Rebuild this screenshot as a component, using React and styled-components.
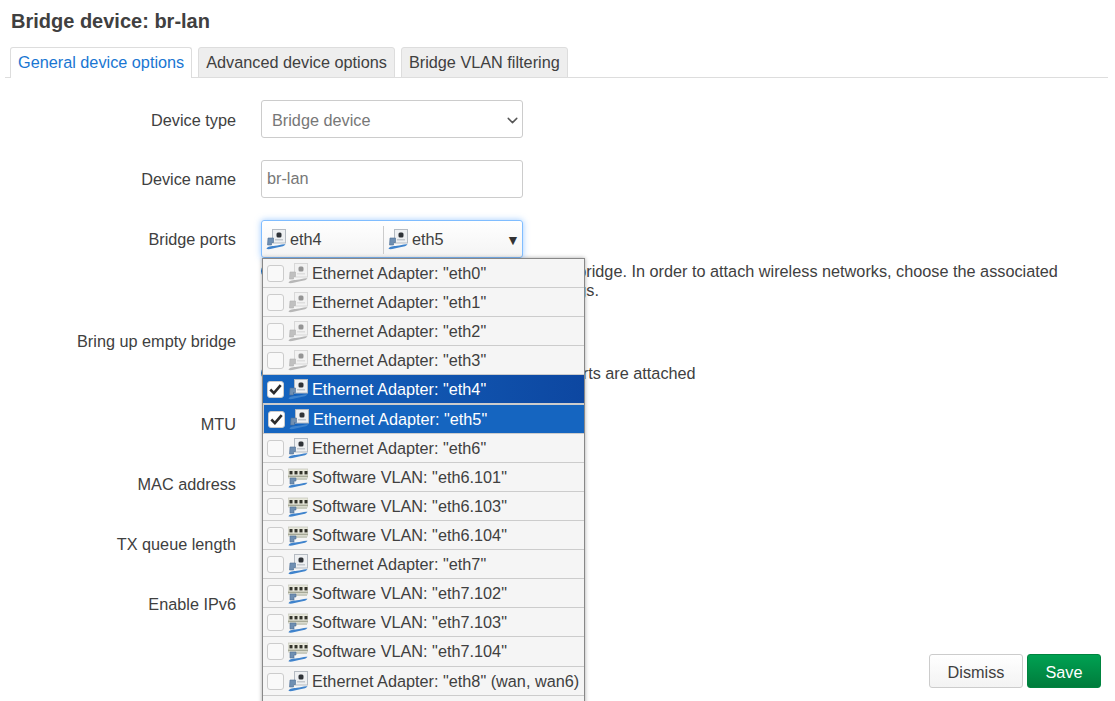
import React from "react";
import styled, { createGlobalStyle } from "styled-components";
import { ChevronDown } from "lucide-react";

const Global = createGlobalStyle`
  html, body {
    margin: 0;
    height: 701px;
    overflow: hidden;
    background: #fff;
    font-family: "Liberation Sans", Arial, sans-serif;
    font-size: 16.25px;
    color: #404040;
  }
`;

const Page = styled.div`
  padding: 0 7px 0 5px;
`;
const Title = styled.h3`
  margin: 0;
  padding: 9px 0 0 6px;
  height: 38px;
  box-sizing: content-box;
  font-size: 20px;
  line-height: 24px;
  font-weight: bold;
`;
const TabBar = styled.div`
  display: flex;
  gap: 6px;
  padding-left: 5px;
  height: 30px;
  border-bottom: 1px solid #ddd;
`;
const Tab = styled.div`
  box-sizing: border-box;
  height: 31px;
  padding: 0 7px;
  line-height: 29px;
  border: 1px solid #ddd;
  border-bottom: ${(p) => (p.$active ? "none" : "1px solid #ddd")};
  border-radius: 3px 3px 0 0;
  background: ${(p) => (p.$active ? "#fff" : "#eee")};
  color: ${(p) => (p.$active ? "#1976d2" : "#404040")};
  white-space: nowrap;
`;
const Form = styled.div`
  padding-top: 22px;
  display: flex;
  flex-direction: column;
`;
const Row = styled.div`
  display: grid;
  grid-template-columns: 231px 1fr;
  column-gap: 25px;
  margin-bottom: ${(p) => p.$gap}px;
`;
const Label = styled.div`
  text-align: right;
  height: 38px;
  line-height: ${(p) => p.$lh || 38}px;
  margin-top: ${(p) => p.$top || 0}px;
`;
const Field = styled.div`
  position: relative;
  min-width: 0;
`;
const Control = styled.div`
  box-sizing: border-box;
  width: 262px;
  height: 38px;
  border: 1px solid #ccc;
  border-radius: 3px;
  background: #fff;
  color: #777;
  display: flex;
  align-items: center;
  padding: 0 5px 1px;
`;
const SelectBox = styled(Control)`
  justify-content: space-between;
  padding: 2px 1px 0 10px;
  color: #777;
`;
const Multi = styled.div`
  box-sizing: border-box;
  width: 262px;
  height: 38px;
  border: 1px solid #80bdff;
  border-radius: 3px;
  background: linear-gradient(#fff, #f4f4f4);
  box-shadow: 0 0 6px rgba(80, 160, 255, 0.55);
  display: grid;
  grid-template-columns: 122px 1fr 18px;
  align-items: center;
  color: #404040;
`;
const Chip = styled.div`
  box-sizing: border-box;
  display: flex;
  align-items: center;
  gap: 4px;
  height: 28px;
  padding: 0 0 2px 4px;
  border-right: ${(p) => (p.$line ? "1px solid #ccc" : "none")};
`;
const Caret = styled.div`
  font-size: 14px;
  color: #333;
  line-height: 38px;
  padding-left: 2px;
`;
const Help = styled.div`
  position: relative;
  box-sizing: border-box;
  width: 810px;
  line-height: 19px;
  padding-left: 20px;
  margin-top: ${(p) => p.$top}px;
`;
const HelpIcon = styled.span`
  position: absolute;
  left: 0;
  top: 2px;
  width: 14px;
  height: 14px;
  border-radius: 50%;
  background: #1976d2;
`;
const Dropdown = styled.div`
  position: absolute;
  top: 38px;
  left: 1px;
  width: 323px;
  box-sizing: border-box;
  background: #f5f5f5;
  border: 1px solid #888;
  border-bottom: none;
  box-shadow: 0 0 4px rgba(0, 0, 0, 0.35);
  z-index: 5;
`;
const Item = styled.div`
  box-sizing: border-box;
  height: ${(p) => p.$h}px;
  display: flex;
  align-items: center;
  padding-left: 4px;
  gap: 4px;
  white-space: nowrap;
  color: ${(p) => (p.$sel ? "#fff" : "#404040")};
  border-bottom: 1px solid #ccc;
  border-top: ${(p) => (p.$focus ? "1px solid #ccc" : "none")};
  border-left: ${(p) => (p.$focus ? "1px solid #ccc" : "none")};
  background: ${(p) =>
    p.$focus
      ? "#1565c0"
      : p.$sel
        ? "linear-gradient(90deg, #1565c0, #0d47a1)"
        : "#f5f5f5"};
`;
const Check = styled.span`
  box-sizing: border-box;
  width: 17px;
  height: 17px;
  flex: none;
  border: 1px solid #ccc;
  border-radius: 3px;
  background: ${(p) => (p.$on ? "#fff" : "#f9f9f9")};
  display: flex;
  align-items: center;
  justify-content: center;
`;
const Footer = styled.div`
  display: flex;
  justify-content: flex-end;
  gap: 4px;
  padding-right: 7px;
  margin-top: 31px;
`;
const Button = styled.div`
  box-sizing: border-box;
  height: 34px;
  line-height: 34px;
  text-align: center;
  border-radius: 3px;
  width: ${(p) => p.$w}px;
  border: 1px solid ${(p) => (p.$primary ? "#00843f" : "#ccc")};
  color: ${(p) => (p.$primary ? "#fff" : "#404040")};
  background: ${(p) =>
    p.$primary
      ? "linear-gradient(#00a152, #007c3c)"
      : "linear-gradient(#fff, #f3f3f3)"};
`;

const EthIcon = ({ dim }) => (
  <svg width="20" height="21" viewBox="0 0 20 21" style={{ flex: "none", filter: dim ? "grayscale(1) opacity(.5)" : "none" }}>
    <rect x="6.5" y="0.5" width="13" height="13.5" fill="#eef0f2" stroke="#b5bbc2" />
    <rect x="10.5" y="3.5" width="5" height="5" rx="1.5" fill="#2f3338" />
    <rect x="9" y="10" width="8" height="1.5" fill="#c3c8cd" />
    <path d="M2 9h5.5v4.5H5.5V16H1.5z" fill="#6f8fb2" stroke="#4d6f96" strokeWidth=".6" />
    <path
      d="M0.5 20c1-3 5-2.6 8.5-3.2 3.5-.6 7-2 10.5-1.6-1.4 2.6-5.5 2.6-8.5 3.2-3.5.7-7 2.2-10.5 1.6z"
      fill="#3f83cc"
    />
  </svg>
);

const VlanIcon = () => (
  <svg width="20" height="21" viewBox="0 0 20 21" style={{ flex: "none" }}>
    <rect x="0" y="2" width="20" height="9" fill="#e8e8dc" stroke="#b9bbb0" strokeWidth=".6" />
    {[1.5, 6.5, 11.5, 16.5].map((x) => (
      <rect key={x} x={x} y="4" width="3" height="3.4" fill="#34342c" />
    ))}
    <rect x="0" y="8.6" width="20" height="1.4" fill="#a5a896" />
    <rect x="8" y="11" width="11" height="2" fill="#c9ccc0" />
    <path d="M2 11h6v3H6v3H2z" fill="#6f8fb2" stroke="#4d6f96" strokeWidth=".6" />
    <path
      d="M0.5 20.5c1-3 5-2.6 8.5-3.2 3.5-.6 7-2 10.5-1.6-1.4 2.6-5.5 2.6-8.5 3.2-3.5.7-7 2.2-10.5 1.6z"
      fill="#3f83cc"
    />
  </svg>
);

const Tick = () => (
  <svg width="13" height="11" viewBox="0 0 13 11">
    <path d="M1.3 5.5l3.6 3.6 6.8-8" fill="none" stroke="#2c2c2c" strokeWidth="2.6" />
  </svg>
);

const ports = [
  ["eth", 'Ethernet Adapter: "eth0"', true],
  ["eth", 'Ethernet Adapter: "eth1"', true],
  ["eth", 'Ethernet Adapter: "eth2"', true],
  ["eth", 'Ethernet Adapter: "eth3"', true],
  ["eth", 'Ethernet Adapter: "eth4"', false, "sel"],
  ["eth", 'Ethernet Adapter: "eth5"', false, "focus"],
  ["eth", 'Ethernet Adapter: "eth6"'],
  ["vlan", 'Software VLAN: "eth6.101"'],
  ["vlan", 'Software VLAN: "eth6.103"'],
  ["vlan", 'Software VLAN: "eth6.104"'],
  ["eth", 'Ethernet Adapter: "eth7"'],
  ["vlan", 'Software VLAN: "eth7.102"'],
  ["vlan", 'Software VLAN: "eth7.103"'],
  ["vlan", 'Software VLAN: "eth7.104"'],
  ["eth", 'Ethernet Adapter: "eth8" (wan, wan6)'],
];

const App = () => {
  return (
    <Page>
      <Global />
      <Title>Bridge device: br-lan</Title>
      <TabBar>
        <Tab $active>General device options</Tab>
        <Tab>Advanced device options</Tab>
        <Tab>Bridge VLAN filtering</Tab>
      </TabBar>
      <Form>
        <Row $gap={22}>
          <Label $lh={40}>Device type</Label>
          <Field>
            <SelectBox>
              Bridge device
              <ChevronDown size={17} color="#555" strokeWidth={2} />
            </SelectBox>
          </Field>
        </Row>
        <Row $gap={22}>
          <Label>Device name</Label>
          <Field>
            <Control>br-lan</Control>
          </Field>
        </Row>
        <Row $gap={0}>
          <Label>Bridge ports</Label>
          <Field>
            <Multi>
              <Chip $line>
                <EthIcon />
                eth4
              </Chip>
              <Chip>
                <EthIcon />
                eth5
              </Chip>
              <Caret>▼</Caret>
            </Multi>
            <Dropdown>
              {ports.map(([kind, text, dim, state], i) => (
                <Item
                  key={text}
                  $sel={!!state}
                  $focus={state === "focus"}
                  $h={i === 5 || i === 13 ? 30 : 29}
                >
                  <Check $on={!!state}>{state && <Tick />}</Check>
                  {kind === "eth" ? <EthIcon dim={dim} /> : <VlanIcon />}
                  {text}
                </Item>
              ))}
              <Item $h={20} />
            </Dropdown>
            <Help $top={4}>
              <HelpIcon />
              Specifies the wired ports to attach to this bridge. In order to attach
              wireless networks, choose the associated interface as network in the
              wireless settings.
            </Help>
          </Field>
        </Row>
        <Row $gap={22}>
          <Label $top={22}>Bring up empty bridge</Label>
          <Field>
            <Help $top={64}>
              <HelpIcon />
              Bring up the bridge interface even if no ports are attached
            </Help>
          </Field>
        </Row>
        <Row $gap={22}>
          <Label>MTU</Label>
          <Field />
        </Row>
        <Row $gap={22}>
          <Label>MAC address</Label>
          <Field />
        </Row>
        <Row $gap={22}>
          <Label>TX queue length</Label>
          <Field />
        </Row>
        <Row $gap={0}>
          <Label>Enable IPv6</Label>
          <Field />
        </Row>
      </Form>
      <Footer>
        <Button $w={94}>Dismiss</Button>
        <Button $w={74} $primary>
          Save
        </Button>
      </Footer>
    </Page>
  );
};

export default App;
